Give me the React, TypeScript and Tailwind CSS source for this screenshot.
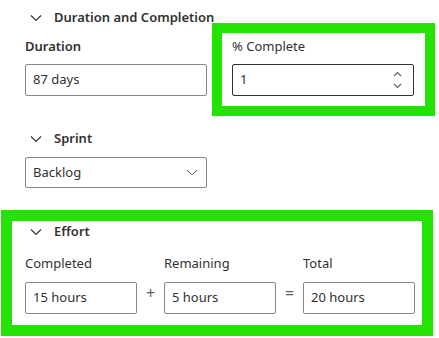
import React from "react";

const Chevron = ({ className = "" }: { className?: string }) => (
  <svg width="12" height="8" viewBox="0 0 12 8" className={className} fill="none">
    <path d="M1 1.5 L6 6.5 L11 1.5" stroke="#323130" strokeWidth="1.1" />
  </svg>
);

const SmallChevron = ({ up = false }: { up?: boolean }) => (
  <svg width="9" height="6" viewBox="0 0 9 6" fill="none">
    <path d={up ? "M1 5 L4.5 1.5 L8 5" : "M1 1 L4.5 4.5 L8 1"} stroke="#605e5c" strokeWidth="1.1" />
  </svg>
);

const SectionHeader = ({ title }: { title: string }) => (
  <div className="flex items-center h-[20px] pl-[5px]">
    <Chevron />
    <span className="ml-[12px] text-[13px] font-semibold text-[#323130]">{title}</span>
  </div>
);

const TextBox = ({ value, w, dark = false }: { value: string; w: string; dark?: boolean }) => (
  <div
    className={`${w} h-[32px] border ${dark ? "border-[#323130]" : "border-[#8a8886]"} rounded-[2px] flex items-center px-[7px] text-[13px] text-[#323130] bg-white`}
  >
    {value}
  </div>
);

export default function App() {
  return (
    <div
      className="relative w-[439px] h-[338px] bg-white overflow-hidden"
      style={{ fontFamily: '"Noto Sans", "Open Sans", sans-serif' }}
    >
      <div className="pt-[8px] pl-[25px] flex flex-col">
        <SectionHeader title="Duration and Completion" />
        <div className="flex gap-[25px] mt-[8px]">
          <div className="flex flex-col">
            <div className="h-[20px] leading-[20px] text-[13px] font-semibold text-[#323130]">Duration</div>
            <div className="mt-[8px]">
              <TextBox value="87 days" w="w-[182px]" />
            </div>
          </div>
          <div className="flex flex-col">
            <div className="h-[20px] leading-[20px] text-[13px] text-[#323130]">% Complete</div>
            <div className="mt-[8px] w-[182px] h-[32px] border border-[#323130] rounded-[2px] flex items-center justify-between pl-[7px] pr-[11px] text-[13px] text-[#323130]">
              <span>1</span>
              <div className="flex flex-col gap-[6px]">
                <SmallChevron up />
                <SmallChevron />
              </div>
            </div>
          </div>
        </div>

        <div className="mt-[33px]">
          <SectionHeader title="Sprint" />
        </div>
        <div className="mt-[8px] w-[182px] h-[31px] border border-[#8a8886] rounded-[2px] flex items-center justify-between pl-[7px] pr-[8px] text-[13px] text-[#323130]">
          <span>Backlog</span>
          <svg width="12" height="7" viewBox="0 0 12 7" fill="none">
            <path d="M1 1 L6 6 L11 1" stroke="#605e5c" strokeWidth="1" />
          </svg>
        </div>

        <div className="mt-[34px]">
          <SectionHeader title="Effort" />
        </div>
        <div className="flex mt-[11px]">
          <div className="flex flex-col">
            <div className="h-[20px] leading-[20px] text-[13px] text-[#323130]">Completed</div>
            <div className="mt-[9px]">
              <TextBox value="15 hours" w="w-[112px]" />
            </div>
          </div>
          <div className="w-[27px] flex items-end justify-center pb-[9px] text-[16px] text-[#605e5c]">+</div>
          <div className="flex flex-col">
            <div className="h-[20px] leading-[20px] text-[13px] text-[#323130]">Remaining</div>
            <div className="mt-[9px]">
              <TextBox value="5 hours" w="w-[112px]" />
            </div>
          </div>
          <div className="w-[27px] flex items-end justify-center pb-[9px] text-[16px] text-[#605e5c]">=</div>
          <div className="flex flex-col">
            <div className="h-[20px] leading-[20px] text-[13px] text-[#323130]">Total</div>
            <div className="mt-[9px]">
              <TextBox value="20 hours" w="w-[112px]" />
            </div>
          </div>
        </div>
      </div>

      {/* highlight annotations */}
      <div className="absolute left-[212px] top-[23px] w-[223px] h-[93px] border-[10px] border-[#22e400] pointer-events-none" />
      <div className="absolute left-[1px] top-[210px] w-[432px] h-[126px] border-[11px] border-[#22e400] pointer-events-none" />
    </div>
  );
}
